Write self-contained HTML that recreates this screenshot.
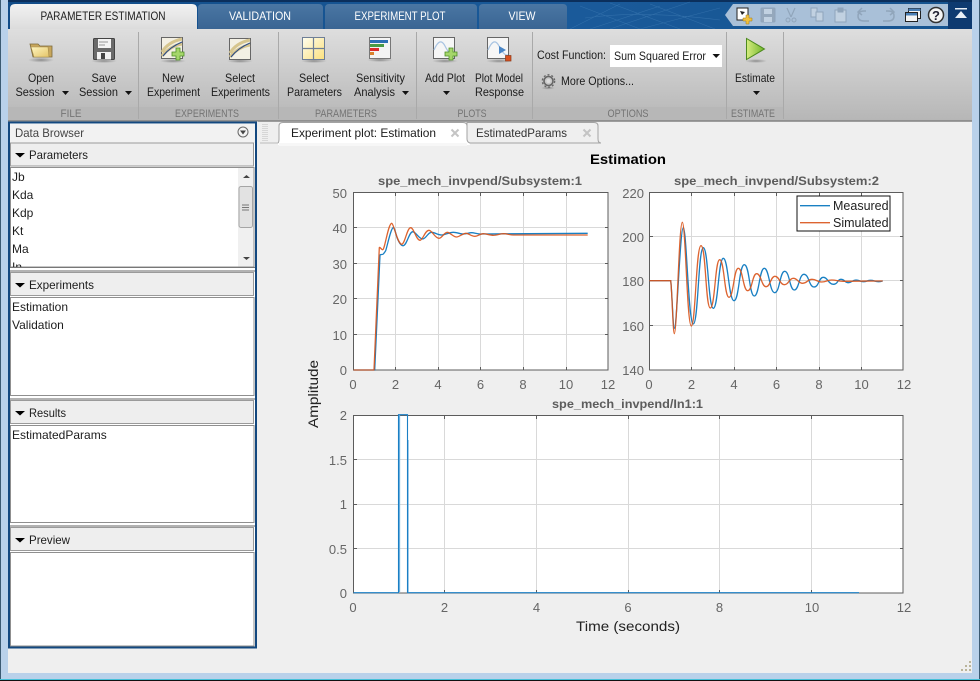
<!DOCTYPE html>
<html><head><meta charset="utf-8"><style>
html,body{margin:0;padding:0;background:#efefef;width:980px;height:681px;overflow:hidden}
svg{display:block}
text{font-family:"Liberation Sans",sans-serif}
.u{font-size:12px;fill:#1c1c1c}
.c{text-anchor:middle}
.s{font-size:11px;fill:#747474;text-anchor:middle}
.t{font-size:12px;fill:#fff;text-anchor:middle}
.k{font-size:13px;fill:#666}
.r{text-anchor:end}
.g{stroke:#d9d9d9;stroke-width:1;fill:none}
.b{stroke:#0072bd;stroke-width:1.3;fill:none;stroke-opacity:.9}
.o{stroke:#d95319;stroke-width:1.3;fill:none;stroke-opacity:.9}
.ax{fill:#fff;stroke:#5c5c5c;stroke-width:1}
.sep{stroke:#a9a9a9;stroke-width:1}
.hd{fill:#eeeeee;stroke:#9a9a9a;stroke-width:1}
.li{fill:#fff;stroke:#8f8f8f;stroke-width:1}
.qi{opacity:.9}
</style></head><body>
<svg width="980" height="681" viewBox="0 0 980 681" xmlns="http://www.w3.org/2000/svg">
<defs>
<linearGradient id="rib" x1="0" y1="0" x2="0" y2="1"><stop offset="0" stop-color="#dedede"/><stop offset="1" stop-color="#b6b6b6"/></linearGradient>
<linearGradient id="act" x1="0" y1="0" x2="0" y2="1"><stop offset="0" stop-color="#f2f2f2"/><stop offset="1" stop-color="#dcdcdc"/></linearGradient>
<linearGradient id="tab" x1="0" y1="0" x2="0" y2="1"><stop offset="0" stop-color="#4a76a3"/><stop offset="1" stop-color="#3a6593"/></linearGradient>
<linearGradient id="hdr" x1="0" y1="0" x2="1" y2="0"><stop offset="0" stop-color="#114c88"/><stop offset=".6" stop-color="#1a5a9a"/><stop offset="1" stop-color="#15538f"/></linearGradient>
<linearGradient id="fold" x1="0" y1="0" x2="1" y2="1"><stop offset="0" stop-color="#fff6c0"/><stop offset="1" stop-color="#e4c468"/></linearGradient>
<linearGradient id="play" x1="0" y1="0" x2="1" y2="0"><stop offset="0" stop-color="#d6ec80"/><stop offset="1" stop-color="#6fb52a"/></linearGradient>
<linearGradient id="grid" x1="0" y1="0" x2="1" y2="1"><stop offset="0" stop-color="#fffef0"/><stop offset="1" stop-color="#fbe07c"/></linearGradient>
<radialGradient id="sh"><stop offset="0" stop-color="#555" stop-opacity=".55"/><stop offset="1" stop-color="#555" stop-opacity="0"/></radialGradient>
<clipPath id="c1"><rect x="10" y="168" width="228" height="99"/></clipPath>
</defs>

<!-- window -->
<rect width="980" height="681" fill="#b9d1ea"/>
<rect x="0" y="0" width="1" height="681" fill="#3b5a72"/>
<rect x="979" y="0" width="1" height="681" fill="#3b5a72"/>
<rect x="0" y="679" width="980" height="1" fill="#46c0d8"/>
<rect x="0" y="680" width="980" height="1" fill="#111"/>
<rect x="8" y="121" width="964" height="552" fill="#efefef"/>

<!-- header -->
<rect x="8" y="0" width="964" height="29" fill="url(#hdr)"/>
<rect x="8" y="0" width="964" height="2" fill="#0b2f5c"/>
<path d="M570 29L620 4M590 29L660 6M610 29L690 2M640 29L720 8M580 6L640 29M610 3L680 29M650 4L715 29M585 18Q640 10 720 20" stroke="#3a78b0" stroke-width=".6" fill="none" opacity=".7"/>
<rect x="948" y="2" width="24" height="27" fill="#0e3a70"/>
<path d="M955 18H967L961 11Z" fill="#e8eef5"/><rect x="955" y="8" width="12" height="1.5" fill="#e8eef5"/>
<path d="M733 4H948V26H733L725 15Z" fill="#a9c0d8"/>

<!-- tabs -->
<path d="M198 29V8Q198 4 202 4H319Q323 4 323 8V29Z" fill="url(#tab)"/>
<path d="M325 29V8Q325 4 329 4H473Q477 4 477 8V29Z" fill="url(#tab)"/>
<path d="M479 29V8Q479 4 483 4H563Q567 4 567 8V29Z" fill="url(#tab)"/>
<path d="M10 29V9Q10 4 15 4H192Q197 4 197 9V29Z" fill="url(#act)"/>
<text x="103" y="20" class="u c" textLength="125" lengthAdjust="spacingAndGlyphs">PARAMETER ESTIMATION</text>
<text x="260" y="20" class="t" textLength="62" lengthAdjust="spacingAndGlyphs">VALIDATION</text>
<text x="400" y="20" class="t" textLength="91" lengthAdjust="spacingAndGlyphs">EXPERIMENT PLOT</text>
<text x="522" y="20" class="t" textLength="27" lengthAdjust="spacingAndGlyphs">VIEW</text>

<!-- ribbon -->
<rect x="8" y="29" width="964" height="92" fill="url(#rib)"/>
<rect x="8" y="107" width="775.5" height="14" fill="#b7b7b7"/>
<rect x="8" y="120" width="964" height="1.5" fill="#8f8f8f"/>
<path class="sep" d="M138.5 32V119M278.5 32V119M416.5 32V119M532.5 32V119M726.5 32V119M783.5 32V119"/>
<text x="71" y="117" class="s" textLength="21" lengthAdjust="spacingAndGlyphs">FILE</text>
<text x="207" y="117" class="s" textLength="64" lengthAdjust="spacingAndGlyphs">EXPERIMENTS</text>
<text x="346" y="117" class="s" textLength="62" lengthAdjust="spacingAndGlyphs">PARAMETERS</text>
<text x="472" y="117" class="s" textLength="29" lengthAdjust="spacingAndGlyphs">PLOTS</text>
<text x="628" y="117" class="s" textLength="41" lengthAdjust="spacingAndGlyphs">OPTIONS</text>
<text x="753" y="117" class="s" textLength="44" lengthAdjust="spacingAndGlyphs">ESTIMATE</text>

<!-- ribbon labels -->
<text x="41" y="82" class="u c" textLength="26" lengthAdjust="spacingAndGlyphs">Open</text>
<text x="35" y="96" class="u c" textLength="39" lengthAdjust="spacingAndGlyphs">Session</text>
<text x="104" y="82" class="u c" textLength="25" lengthAdjust="spacingAndGlyphs">Save</text>
<text x="98.5" y="96" class="u c" textLength="39" lengthAdjust="spacingAndGlyphs">Session</text>
<text x="173" y="82" class="u c" textLength="22" lengthAdjust="spacingAndGlyphs">New</text>
<text x="173.5" y="96" class="u c" textLength="53" lengthAdjust="spacingAndGlyphs">Experiment</text>
<text x="240" y="82" class="u c" textLength="30" lengthAdjust="spacingAndGlyphs">Select</text>
<text x="240.5" y="96" class="u c" textLength="59" lengthAdjust="spacingAndGlyphs">Experiments</text>
<text x="314" y="82" class="u c" textLength="30" lengthAdjust="spacingAndGlyphs">Select</text>
<text x="314.5" y="96" class="u c" textLength="55" lengthAdjust="spacingAndGlyphs">Parameters</text>
<text x="380.5" y="82" class="u c" textLength="49" lengthAdjust="spacingAndGlyphs">Sensitivity</text>
<text x="374.5" y="96" class="u c" textLength="41" lengthAdjust="spacingAndGlyphs">Analysis</text>
<text x="445" y="82" class="u c" textLength="40" lengthAdjust="spacingAndGlyphs">Add Plot</text>
<text x="499" y="82" class="u c" textLength="48" lengthAdjust="spacingAndGlyphs">Plot Model</text>
<text x="499.5" y="96" class="u c" textLength="49" lengthAdjust="spacingAndGlyphs">Response</text>
<text x="537" y="59" class="u" textLength="69" lengthAdjust="spacingAndGlyphs">Cost Function:</text>
<text x="561" y="85" class="u" textLength="73" lengthAdjust="spacingAndGlyphs">More Options...</text>
<text x="755" y="82" class="u c" textLength="40" lengthAdjust="spacingAndGlyphs">Estimate</text>
<path d="M62 91H69L65.5 95ZM125 91H132L128.5 95ZM402 91H409L405.5 95ZM443 91H450L446.5 95ZM753 91H760L756.5 95Z" fill="#111"/>
<rect x="610" y="45" width="112" height="22" fill="#fff"/>
<text x="614" y="60" class="u" textLength="92" lengthAdjust="spacingAndGlyphs">Sum Squared Error</text>
<path d="M712.5 54H720L716.2 58Z" fill="#111"/>

<!-- ribbon icons -->
<ellipse cx="41" cy="60" rx="13" ry="2.5" fill="url(#sh)"/>
<path d="M30 44H38L40 46H52V57H33Z" fill="#c8a75c" stroke="#7c6a3c" stroke-width=".8"/>
<path d="M31 47H48L49 57H34Z" fill="url(#fold)" stroke="#a58c4a" stroke-width=".6"/>
<ellipse cx="104" cy="61" rx="13" ry="2" fill="url(#sh)"/>
<rect x="93.5" y="38.5" width="21" height="21" rx="1" fill="#6a6a6a" stroke="#444"/>
<rect x="98" y="39" width="13" height="9" fill="#f4f4f4"/><path d="M99 42H108M99 45H105" stroke="#999" stroke-width="1"/>
<rect x="97" y="52" width="14" height="7.5" fill="#f2f2f2"/><rect x="101" y="53" width="4" height="6" fill="#444"/>

<ellipse cx="173" cy="61" rx="13" ry="2" fill="url(#sh)"/>
<rect x="161.5" y="37.5" width="21" height="21" fill="#f3f0e4" stroke="#666"/>
<path d="M162 52Q168 42 182 39M162 56Q170 46 182 44" stroke="#d6c58e" stroke-width="3" fill="none"/>
<path d="M163 56Q170 47 182 42" stroke="#2f4d85" stroke-width="1.2" fill="none"/>
<path d="M176 48h4v4h4v4h-4v4h-4v-4h-4v-4h4z" fill="#a5d66a" stroke="#4e8f25" stroke-width=".8"/>
<ellipse cx="240" cy="61" rx="13" ry="2" fill="url(#sh)"/>
<rect x="229.5" y="38.5" width="21" height="21" fill="#f3f0e4" stroke="#666"/>
<path d="M230 53Q236 43 250 40M230 57Q238 47 250 45" stroke="#d6c58e" stroke-width="3" fill="none"/>
<path d="M231 57Q238 48 250 43" stroke="#2f4d85" stroke-width="1.2" fill="none"/>
<ellipse cx="314" cy="61" rx="13" ry="2" fill="url(#sh)"/>
<rect x="302.5" y="37.5" width="22" height="22" fill="url(#grid)" stroke="#6f7f96"/>
<path d="M313.5 38V59M303 48.5H324" stroke="#6f7f96" stroke-width="1.2"/>
<ellipse cx="380" cy="60" rx="13" ry="2" fill="url(#sh)"/>
<rect x="369.5" y="37.5" width="21" height="21" fill="#f4f4f4" stroke="#777"/>
<rect x="370" y="40" width="18" height="3" fill="#2c6fb5"/><rect x="370" y="44" width="14" height="3" fill="#4a9a46"/><rect x="370" y="48" width="9" height="3" fill="#d92c2c"/><rect x="370" y="52" width="4" height="3" fill="#d9822c"/>

<ellipse cx="445" cy="61" rx="13" ry="2" fill="url(#sh)"/>
<rect x="433.5" y="37.5" width="21" height="21" fill="#f6f6f6" stroke="#666"/>
<path d="M434 50Q440 36 445 46T454 55" stroke="#a9c4e2" stroke-width="1.2" fill="none"/>
<path d="M449 48h4v4h4v4h-4v4h-4v-4h-4v-4h4z" fill="#a5d66a" stroke="#4e8f25" stroke-width=".8"/>
<ellipse cx="499" cy="61" rx="13" ry="2" fill="url(#sh)"/>
<rect x="487.5" y="37.5" width="21" height="21" fill="#f6f6f6" stroke="#666"/>
<path d="M488 50Q494 36 499 46T508 55" stroke="#a9c4e2" stroke-width="1.2" fill="none"/>
<path d="M499 46L506 50L499 54Z" fill="#4a86c6"/>
<rect x="505.5" y="55.5" width="5.5" height="5.5" fill="#d9501e" stroke="#8a3a1a" stroke-width=".7"/>

<ellipse cx="548" cy="88" rx="7" ry="1.5" fill="url(#sh)"/>
<circle cx="548.5" cy="81" r="4.5" fill="none" stroke="#666" stroke-width="1.6"/>
<circle cx="548.5" cy="81" r="6.2" fill="none" stroke="#666" stroke-width="1.3" stroke-dasharray="2 2"/>
<circle cx="548.5" cy="81" r="2" fill="#ddd"/>

<ellipse cx="756" cy="61" rx="11" ry="2" fill="url(#sh)"/>
<path d="M746.5 38.5V59.5L764.5 49Z" fill="url(#play)" stroke="#4d8a1e"/>

<!-- quick access icons -->
<rect x="737" y="8" width="11" height="12" fill="#fff" stroke="#222"/><path d="M740 11l5 1-3 3z" fill="#222"/>
<path d="M746 15h3v3h3v3h-3v3h-3v-3h-3v-3h3z" fill="#f0c040" stroke="#a07a18" stroke-width=".5"/>
<g class="qi" fill="#8ea3b8" stroke="#8ea3b8">
<rect x="761" y="8" width="14" height="14" rx="1" fill="#93a6ba"/><rect x="764" y="9" width="8" height="5" fill="#c4d3e2" stroke="none"/><rect x="764" y="17" width="8" height="5" fill="#c4d3e2" stroke="none"/>
<path d="M787 8L791 17M795 8L791 17" fill="none" stroke-width="1.2"/><circle cx="788" cy="20" r="2" fill="none"/><circle cx="794" cy="20" r="2" fill="none"/>
<rect x="811" y="8" width="6" height="9" fill="#c4d3e2"/><rect x="816" y="12" width="7" height="9" fill="#c4d3e2"/>
<rect x="835" y="10" width="11" height="12" fill="#c4d3e2"/><rect x="838" y="8" width="5" height="4"/>
<path d="M869 21H864Q858 21 858 16T864 11H866M862 8L858 12L862 15" fill="none" stroke-width="1.5"/>
<path d="M883 21H888Q894 21 894 16T888 11H886M890 8L894 12L890 15" fill="none" stroke-width="1.5"/>
</g>
<rect x="908.5" y="8.5" width="12" height="10" fill="#f4f4f4" stroke="#222"/><rect x="908.5" y="8.5" width="12" height="2.5" fill="#4a7fb5"/>
<rect x="905.5" y="12.5" width="12" height="9" fill="#f4f4f4" stroke="#222"/><rect x="906" y="13" width="11" height="2.5" fill="#4a7fb5"/>
<circle cx="936" cy="15" r="7.5" fill="#f5f5f5" stroke="#333" stroke-width="1.5"/>
<text x="936" y="20" class="c" style="font-size:13px;font-weight:bold;fill:#223">?</text>

<!-- left panel -->
<rect x="9" y="122.5" width="247" height="525" fill="#fff" stroke="#13487f" stroke-width="2"/>
<rect x="10" y="124" width="245" height="19" fill="#f2f2f2"/>
<text x="15" y="137" class="u" textLength="69" lengthAdjust="spacingAndGlyphs" style="fill:#444">Data Browser</text>
<circle cx="243" cy="132" r="5" fill="#f4f4f4" stroke="#666"/><path d="M240 130.5H246L243 134.5Z" fill="#444"/>

<rect class="hd" x="10.5" y="143" width="243" height="23"/>
<path d="M15 153H25L20 157.5Z" fill="#000"/>
<text x="29" y="159" class="u" textLength="59" lengthAdjust="spacingAndGlyphs">Parameters</text>
<rect class="li" x="10.5" y="167.5" width="243.5" height="99.5"/>
<g clip-path="url(#c1)">
<text x="12" y="181" class="u">Jb</text>
<text x="12" y="199" class="u">Kda</text>
<text x="12" y="217" class="u">Kdp</text>
<text x="12" y="235" class="u">Kt</text>
<text x="12" y="253" class="u">Ma</text>
<text x="12" y="271" class="u">In</text>
</g>
<rect x="238" y="168" width="15.5" height="98.5" fill="#f0f0f0"/>
<path d="M243 178H250L246.5 175ZM243 257H250L246.5 260Z" fill="#444"/>
<rect x="239" y="186.5" width="13.5" height="41" rx="2" fill="#e2e2e2" stroke="#a5a5a5"/>
<path d="M242 205H249M242 207.5H249M242 210H249" stroke="#777"/>
<rect x="10" y="267" width="245" height="1" fill="#777"/>
<rect x="10" y="270.5" width="245" height="1" fill="#666"/>

<rect class="hd" x="10.5" y="272.5" width="243" height="23"/>
<path d="M15 283H25L20 287.5Z" fill="#000"/>
<text x="29" y="289" class="u" textLength="65" lengthAdjust="spacingAndGlyphs">Experiments</text>
<rect class="li" x="10.5" y="297.5" width="243.5" height="98"/>
<text x="12" y="311" class="u">Estimation</text>
<text x="12" y="329" class="u">Validation</text>
<rect x="10" y="398.5" width="245" height="1" fill="#666"/>

<rect class="hd" x="10.5" y="400.5" width="243" height="23"/>
<path d="M15 411H25L20 415.5Z" fill="#000"/>
<text x="29" y="417" class="u" textLength="37" lengthAdjust="spacingAndGlyphs">Results</text>
<rect class="li" x="10.5" y="425.5" width="243.5" height="97"/>
<text x="12" y="439" class="u">EstimatedParams</text>
<rect x="10" y="525.5" width="245" height="1" fill="#666"/>

<rect class="hd" x="10.5" y="527.5" width="243" height="23"/>
<path d="M15 538H25L20 542.5Z" fill="#000"/>
<text x="29" y="544" class="u" textLength="41" lengthAdjust="spacingAndGlyphs">Preview</text>
<rect class="li" x="10.5" y="552.5" width="243.5" height="93.5"/>

<!-- doc tabs -->
<path d="M263 124V142M265 124V142M267 124V142" stroke="#bdbdbd" stroke-dasharray="1 1"/>
<path d="M260 143H278" stroke="#bbb"/>
<rect x="258" y="121" width="714" height="1" fill="#9d9d9d"/>
<path d="M467 122.5H594Q598 122.5 598 126V139Q598 143 601 143H467Z" fill="#efefef" stroke="#a3a3a3"/>
<path d="M278 144Q278 143 279 141V126Q279 122.5 283 122.5H463Q467 122.5 467 126V139Q467 143 470 143.5V145H278Z" fill="#fff"/>
<path d="M278 143Q279 142 279 139V126Q279 122.5 283 122.5H463Q467 122.5 467 126V139Q467 142 470 143" fill="none" stroke="#a3a3a3"/>
<rect x="279" y="143" width="188" height="3" fill="#f7f7f7"/>
<text x="291" y="137" class="u" textLength="145" lengthAdjust="spacingAndGlyphs">Experiment plot: Estimation</text>
<text x="476" y="137" class="u" textLength="91" lengthAdjust="spacingAndGlyphs" style="fill:#333">EstimatedParams</text>
<path d="M451.5 129.5L458.5 136.5M458.5 129.5L451.5 136.5M583.5 129.5L590.5 136.5M590.5 129.5L583.5 136.5" stroke="#c4c4c4" stroke-width="2"/>

<!-- figure -->
<text x="628" y="164" class="c" style="font-size:14px;font-weight:bold;fill:#000" textLength="76" lengthAdjust="spacingAndGlyphs">Estimation</text>
<text x="378" y="185" style="font-size:12px;font-weight:bold;fill:#5c5c5c" textLength="204" lengthAdjust="spacingAndGlyphs">spe_mech_invpend/Subsystem:1</text>
<text x="674" y="185" style="font-size:12px;font-weight:bold;fill:#5c5c5c" textLength="205" lengthAdjust="spacingAndGlyphs">spe_mech_invpend/Subsystem:2</text>
<text x="552" y="408" style="font-size:12px;font-weight:bold;fill:#5c5c5c" textLength="151" lengthAdjust="spacingAndGlyphs">spe_mech_invpend/In1:1</text>

<!-- axes 1 -->
<rect class="ax" x="353.5" y="192.5" width="254.5" height="177.5"/>
<path class="g" d="M395.5 193V370M438.5 193V370M480.5 193V370M523.5 193V370M566.5 193V370M354 227.5H608M354 263.5H608M354 298.5H608M354 334.5H608"/>
<path d="M395.5 193v3M438.5 193v3M480.5 193v3M523.5 193v3M566.5 193v3M395.5 370v-3M438.5 370v-3M480.5 370v-3M523.5 370v-3M566.5 370v-3M354 227.5h3M354 263.5h3M354 298.5h3M354 334.5h3M608 227.5h-3M608 263.5h-3M608 298.5h-3M608 334.5h-3" stroke="#5c5c5c" fill="none"/>
<path class="b" d="M353.5 370H374.7L380 255C381 254 382.5 255 383.3 254S385 252 385.7 250.7C388 243 391 228 393.3 227.7C395 228 396 235 397.3 238.3S401 246 403.3 245.7C407 245 409 232 412.7 231.7C416 232 419 239 422.7 239C426 239 428 232 431.7 232.3C435 232.5 438 235 441.7 235C445 235 449 232.3 453.3 232.3C457 232.3 460 234 463.3 234C466 234 469 232.7 471.7 232.7C474 232.7 477 234 480 234C500 233.8 540 233.3 587.7 233.3"/>
<path class="o" d="M353.5 370H374L379.3 247.7C380 246.5 381.5 250 382.7 249.7C385 249 388 224 391.7 223.3C394 224 397 243 401.7 244.3C405 244 407 227.7 410.7 227.7C414 228 416 240 420 240.3C423 240 425 230.3 429 230.3C432 230.3 435 238.3 439 238.3C442 238.3 444 232.3 447.3 232.3C450 232.3 453 237 456.7 237C459 237 463 233.3 466 233.3C469 233.3 471 236.3 475 236.3C478 236.3 480 233.7 483.3 233.7C486 233.7 490 235.3 493.3 235.3C497 235.3 500 233.7 503.3 233.7C507 233.7 510 235 513.3 235C530 235 560 235 587.7 235"/>
<text x="347" y="198" class="k r">50</text><text x="347" y="233" class="k r">40</text><text x="347" y="269" class="k r">30</text><text x="347" y="304" class="k r">20</text><text x="347" y="340" class="k r">10</text><text x="347" y="375" class="k r">0</text>
<text x="353" y="389" class="k c">0</text><text x="395.5" y="389" class="k c">2</text><text x="438" y="389" class="k c">4</text><text x="480.5" y="389" class="k c">6</text><text x="523" y="389" class="k c">8</text><text x="566" y="389" class="k c">10</text><text x="608" y="389" class="k c">12</text>

<!-- axes 2 -->
<rect class="ax" x="649.5" y="192.5" width="253.5" height="177.5"/>
<path class="g" d="M691.5 193V370M734.5 193V370M776.5 193V370M819.5 193V370M861.5 193V370M650 236.5H903M650 280.5H903M650 325.5H903"/>
<path d="M691.5 193v3M734.5 193v3M776.5 193v3M819.5 193v3M861.5 193v3M691.5 370v-3M734.5 370v-3M776.5 370v-3M819.5 370v-3M861.5 370v-3M650 236.5h3M650 280.5h3M650 325.5h3M903 236.5h-3M903 280.5h-3M903 325.5h-3" stroke="#5c5c5c" fill="none"/>
<path class="b" d="M649.5 280.7H670.7C672 290 673 328.3 674.3 328.3C677 328.3 680 227.7 683.3 227.7S688.3 324 693.3 324S698.3 247.7 703.3 247.7S708.3 308.3 713.3 308.3S718.3 258.3 723.3 258.3S728.7 300.7 734 300.7S739 264.7 744.3 264.7S749.3 296 754.3 296S759.3 268.3 764.3 268.3S769.5 292.7 774.7 292.7S779.7 271.3 784.7 271.3S789.5 290 794.3 290S799 274.3 804 274.3S809 287 814 287S818.7 277.3 823.3 277.3S828.3 284.3 833.3 284.3S837 279.3 841 279.3S844.5 282.7 848.3 282.7S852 280 856 280S859.5 281.7 863.3 281.7S867 280.3 870.7 280.3S874.5 281.7 878.3 281.7S881 281 882.7 281"/>
<path class="o" d="M649.5 280.7H670.7C672 290 673 333.7 674.3 333.7C677 333.7 679 222.3 682.3 222.3S687 326 691.3 326S696 245.7 701 245.7S705.5 308 710.3 308S715 259.7 719.7 259.7S724.3 297.3 729 297.3S733.7 268.3 738.3 268.3S743 290.7 747.7 290.7S752.2 273.7 756.7 273.7S761.5 286.7 766 286.7S770.5 276.3 775 276.3S779.7 284.7 784.3 284.7S788.8 278.3 793.3 278.3S798 283.3 802.7 283.3S807.3 279.3 812 279.3S816.8 282 821.7 282S826.7 280 831.7 280S837.5 281.3 843.3 281.3S870 281 882.7 281"/>
<rect x="797" y="196" width="93" height="35" fill="#fff" stroke="#111"/>
<path d="M800 205.7H830" class="b"/><path d="M800 222.7H830" class="o"/>
<text x="833" y="210" style="font-size:12.5px;fill:#222">Measured</text>
<text x="833" y="227" style="font-size:12.5px;fill:#222">Simulated</text>
<text x="644" y="198" class="k r">220</text><text x="644" y="242" class="k r">200</text><text x="644" y="286" class="k r">180</text><text x="644" y="331" class="k r">160</text><text x="644" y="375" class="k r">140</text>
<text x="649" y="389" class="k c">0</text><text x="691.5" y="389" class="k c">2</text><text x="734" y="389" class="k c">4</text><text x="776.5" y="389" class="k c">6</text><text x="819" y="389" class="k c">8</text><text x="861.5" y="389" class="k c">10</text><text x="904" y="389" class="k c">12</text>

<!-- axes 3 -->
<rect class="ax" x="353.5" y="415.5" width="549.5" height="177.5"/>
<path class="g" d="M444.5 416V593M536.5 416V593M628.5 416V593M719.5 416V593M811.5 416V593M354 459.5H903M354 504.5H903M354 548.5H903"/>
<path d="M444.5 416v3M536.5 416v3M628.5 416v3M719.5 416v3M811.5 416v3M444.5 593v-3M536.5 593v-3M628.5 593v-3M719.5 593v-3M811.5 593v-3M354 459.5h3M354 504.5h3M354 548.5h3M903 459.5h-3M903 504.5h-3M903 548.5h-3" stroke="#5c5c5c" fill="none"/>
<path d="M399.5 415V592M408 440V592" stroke="#6fb2e0" stroke-width="1.3" fill="none"/>
<path d="M353.5 592.7H398.5V414.7H407.5V592.7H859" fill="none" stroke="#1a7fc4" stroke-width="1.1"/>
<text x="347" y="420" class="k r">2</text><text x="347" y="465" class="k r">1.5</text><text x="347" y="509" class="k r">1</text><text x="347" y="554" class="k r">0.5</text><text x="347" y="598" class="k r">0</text>
<text x="353" y="612" class="k c">0</text><text x="444.5" y="612" class="k c">2</text><text x="536.5" y="612" class="k c">4</text><text x="628" y="612" class="k c">6</text><text x="719.5" y="612" class="k c">8</text><text x="812" y="612" class="k c">10</text><text x="904" y="612" class="k c">12</text>

<text transform="translate(318,394) rotate(-90)" class="c" style="font-size:14px;fill:#222" textLength="68" lengthAdjust="spacingAndGlyphs">Amplitude</text>
<text x="628" y="631" class="c" style="font-size:14px;fill:#222" textLength="104" lengthAdjust="spacingAndGlyphs">Time (seconds)</text>

<!-- resize grip -->
<path d="M969 661h2v2h-2zM965 665h2v2h-2zM969 665h2v2h-2zM961 669h2v2h-2zM965 669h2v2h-2zM969 669h2v2h-2z" fill="#b9b49a"/>
</svg>
</body></html>
